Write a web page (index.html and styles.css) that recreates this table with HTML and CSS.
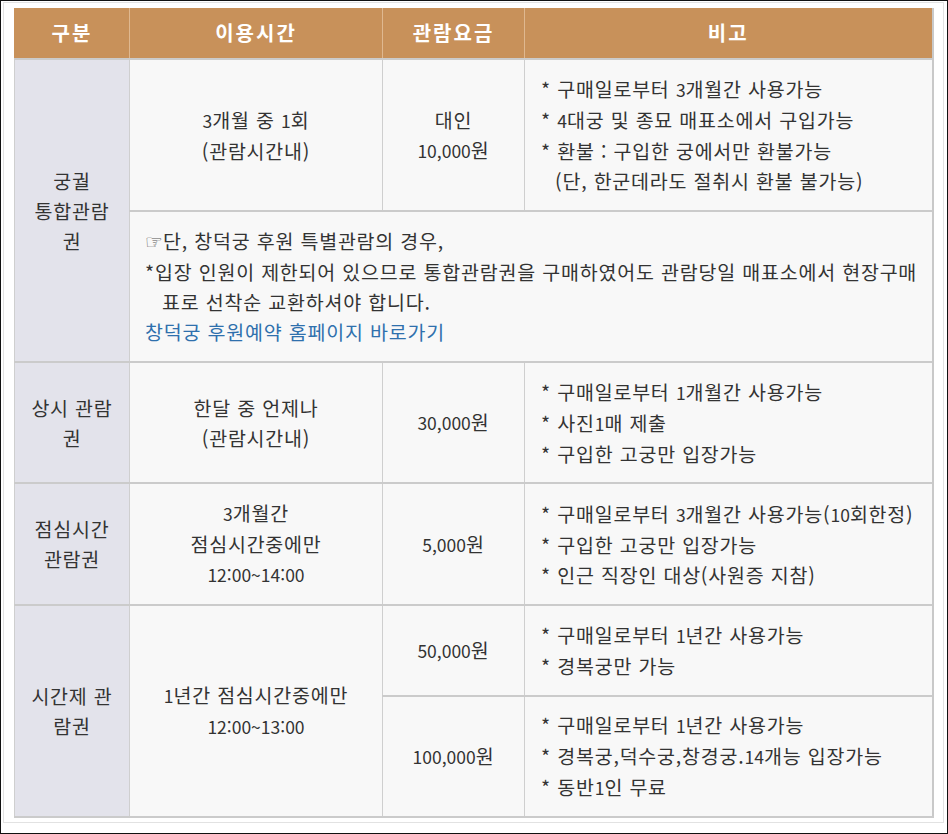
FILE: index.html
```html
<!DOCTYPE html>
<html lang="ko">
<head>
<meta charset="utf-8">
<link rel="stylesheet" href="styles.css">
</head>
<body>
<div class="frame">
  <div class="inner">
    <table class="fees">
      <colgroup>
        <col class="c1"><col class="c2"><col class="c3"><col class="c4">
      </colgroup>
      <thead>
        <tr class="r-head">
          <th>구분</th>
          <th>이용시간</th>
          <th>관람요금</th>
          <th>비고</th>
        </tr>
      </thead>
      <tbody>
        <tr class="r1">
          <td class="kind" rowspan="2">궁궐<br>통합관람<br>권</td>
          <td class="mid"><span class="num">3</span>개월 중 <span class="num">1</span>회<br>(관람시간내)</td>
          <td class="mid">대인<br><span class="num">10,000</span>원</td>
          <td class="note">* 구매일로부터 <span class="num">3</span>개월간 사용가능<br>* <span class="num">4</span>대궁 및 종묘 매표소에서 구입가능<br>* 환불 : 구입한 궁에서만 환불가능<br><span class="ind">(단, 한군데라도 절취시 환불 불가능)</span></td>
        </tr>
        <tr class="r1b">
          <td class="wide" colspan="3"><span class="hand">☞</span>단, 창덕궁 후원 특별관람의 경우,<br>*입장 인원이 제한되어 있으므로 통합관람권을 구매하였어도 관람당일 매표소에서 현장구매<br><span class="ind2">표로 선착순 교환하셔야 합니다.</span><br><a class="link" href="#">창덕궁 후원예약 홈페이지 바로가기</a></td>
        </tr>
        <tr class="r2">
          <td class="kind">상시 관람<br>권</td>
          <td class="mid">한달 중 언제나<br>(관람시간내)</td>
          <td class="mid"><span class="num">30,000</span>원</td>
          <td class="note">* 구매일로부터 <span class="num">1</span>개월간 사용가능<br>* 사진<span class="num">1</span>매 제출<br>* 구입한 고궁만 입장가능</td>
        </tr>
        <tr class="r3">
          <td class="kind">점심시간<br>관람권</td>
          <td class="mid"><span class="num">3</span>개월간<br>점심시간중에만<br><span class="num">12:00~14:00</span></td>
          <td class="mid"><span class="num">5,000</span>원</td>
          <td class="note">* 구매일로부터 <span class="num">3</span>개월간 사용가능(<span class="num">10</span>회한정)<br>* 구입한 고궁만 입장가능<br>* 인근 직장인 대상(사원증 지참)</td>
        </tr>
        <tr class="r4a">
          <td class="kind" rowspan="2">시간제 관<br>람권</td>
          <td class="mid" rowspan="2"><span class="num">1</span>년간 점심시간중에만<br><span class="num">12:00~13:00</span></td>
          <td class="mid"><span class="num">50,000</span>원</td>
          <td class="note">* 구매일로부터 <span class="num">1</span>년간 사용가능<br>* 경복궁만 가능</td>
        </tr>
        <tr class="r4b">
          <td class="mid"><span class="num">100,000</span>원</td>
          <td class="note">* 구매일로부터 <span class="num">1</span>년간 사용가능<br>* 경복궁,덕수궁,창경궁.<span class="num">14</span>개능 입장가능<br>* 동반<span class="num">1</span>인 무료</td>
        </tr>
      </tbody>
    </table>
  </div>
</div>
</body>
</html>
```

FILE: styles.css
```css
html, body {
  margin: 0;
  padding: 0;
  background: #ffffff;
}

.frame {
  width: 948px;
  height: 834px;
  box-sizing: border-box;
  border: 1px solid #111;
  padding: 1px 3px 10px 2px;
  background: #fff;
}

.inner {
  height: 100%;
  box-sizing: border-box;
  border: 1px solid #e2e2e2;
  padding: 5px 11px 5px 10px;
}

.fees {
  border-collapse: collapse;
  width: 918px;
  table-layout: fixed;
  font-family: "Noto Sans CJK KR", "Noto Sans", sans-serif;
  font-size: 19.5px;
  letter-spacing: 0.8px;
  color: #333;
  line-height: 30px;
}

.c1 { width: 115px; }
.c2 { width: 253px; }
.c3 { width: 142px; }
.c4 { width: 408px; }

.fees th {
  background: #c8915a;
  color: #fff;
  font-weight: 700;
  font-size: 20px;
  letter-spacing: 2px;
  height: 50px;
  padding: 0;
  border-left: 1px solid #dfb890;
  border-bottom: 1px solid #d8d8d8;
  text-align: center;
  vertical-align: middle;
}
.fees th:first-child { border-left: 1px solid #c8915a; }
.fees th:last-child { border-right: 2px solid #c9c9c9; }

.fees td {
  background: #f8f8f8;
  border: 1px solid #cfcfcf;
  border-top: 2px solid #cbcbcb;
  padding: 0;
  vertical-align: middle;
}
.fees td.note, .fees td.wide { border-right: 2px solid #c9c9c9; }
.fees tr.r4b td { border-bottom: 2px solid #cbcbcb; }
.fees tr.r4a td.kind, .fees tr.r4a td[rowspan] { border-bottom: 2px solid #cbcbcb; }

.fees td.kind {
  background: #e3e3eb;
  text-align: center;
}

.fees td.mid { text-align: center; }

.fees td.note {
  text-align: left;
  padding-left: 16px;
}

.fees td.wide {
  text-align: left;
  padding-left: 15px;
}

.r1 td { height: 150px; }
.r1b td { height: 149px; }
.r2 td { height: 119px; }
.r3 td { height: 120px; }
.r4a td { height: 89px; }
.r4b td { height: 119px; }

.num {
  font-size: 17.5px;
  letter-spacing: 0;
}

.ind { padding-left: 14px; }
.ind2 { padding-left: 17px; }

.hand {
  font-family: "DejaVu Sans", sans-serif;
  font-size: 20px;
  letter-spacing: 0;
  color: #555;
}

.link {
  color: #2f70ad;
  text-decoration: none;
}
```
